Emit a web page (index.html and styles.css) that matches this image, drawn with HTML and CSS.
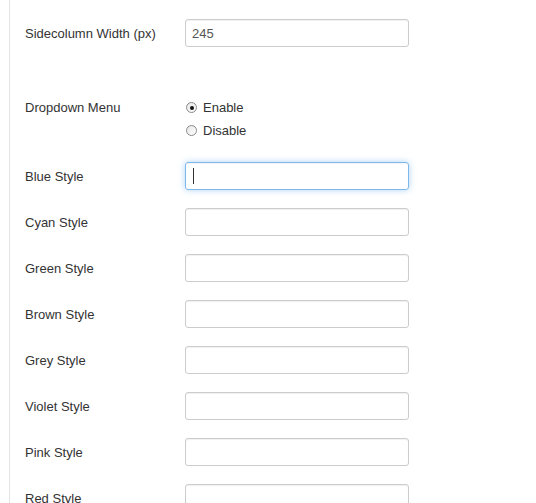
FILE: index.html
```html
<!DOCTYPE html>
<html>
<head>
<meta charset="utf-8">
<link rel="stylesheet" href="styles.css">
</head>
<body>
<div class="panel">
  <div class="row">
    <div class="label">Sidecolumn Width (px)</div>
    <div class="field"><span class="value">245</span></div>
  </div>
  <div class="row row-radio">
    <div class="label">Dropdown Menu</div>
    <div class="radios">
      <div class="opt"><span class="radio checked"></span><span>Enable</span></div>
      <div class="opt"><span class="radio"></span><span>Disable</span></div>
    </div>
  </div>
  <div class="row">
    <div class="label">Blue Style</div>
    <div class="field focus"><span class="caret"></span></div>
  </div>
  <div class="row">
    <div class="label">Cyan Style</div>
    <div class="field"></div>
  </div>
  <div class="row">
    <div class="label">Green Style</div>
    <div class="field"></div>
  </div>
  <div class="row">
    <div class="label">Brown Style</div>
    <div class="field"></div>
  </div>
  <div class="row">
    <div class="label">Grey Style</div>
    <div class="field"></div>
  </div>
  <div class="row">
    <div class="label">Violet Style</div>
    <div class="field"></div>
  </div>
  <div class="row">
    <div class="label">Pink Style</div>
    <div class="field"></div>
  </div>
  <div class="row">
    <div class="label">Red Style</div>
    <div class="field"></div>
  </div>
</div>
</body>
</html>
```
FILE: styles.css
```css
html, body {
  margin: 0;
  padding: 0;
  background: #fff;
  overflow: hidden;
}
body {
  font-family: "Liberation Sans", Arial, sans-serif;
  font-size: 13px;
  color: #333;
  height: 503px;
}
.panel {
  margin-left: 9px;
  border-left: 1px solid #e3e3e3;
  padding-left: 15px;
  padding-top: 19px;
  min-height: 600px;
}
.row {
  display: flex;
  align-items: flex-start;
  margin-bottom: 18px;
}
.row-radio {
  margin-top: 49px;
  margin-bottom: 20px;
}
.label {
  width: 160px;
  flex: none;
  height: 28px;
  line-height: 26px;
  padding-top: 2px;
  box-sizing: border-box;
}
.row-radio .label {
  height: auto;
  line-height: 23px;
  padding-top: 0;
}
.field {
  height: 26px;
  border: 1px solid #ccc;
  border-radius: 3px;
  box-shadow: inset 0 1px 1px rgba(0,0,0,0.06);
  display: flex;
  align-items: center;
  padding-left: 6px;
  box-sizing: content-box;
  width: 216px;
}
.value {
  color: #555;
}
.field.focus {
  border-color: #7fb8ec;
  box-shadow: inset 0 1px 1px rgba(0,0,0,0.05), 0 0 6px rgba(102,175,233,0.55);
}
.caret {
  display: block;
  width: 1px;
  height: 16px;
  background: #333;
  margin-left: 1px;
}
.radios {
  display: flex;
  flex-direction: column;
}
.opt {
  display: flex;
  align-items: center;
  height: 23px;
  gap: 6px;
}
.radio {
  width: 9px;
  height: 9px;
  border: 1px solid #8a8a8a;
  border-radius: 50%;
  background: linear-gradient(135deg, #e6e6e6, #fff);
  position: relative;
  margin-left: 1px;
  box-sizing: content-box;
}
.radio.checked::after {
  content: "";
  position: absolute;
  left: 2.5px;
  top: 2.5px;
  width: 4px;
  height: 4px;
  border-radius: 50%;
  background: #111;
}
```
